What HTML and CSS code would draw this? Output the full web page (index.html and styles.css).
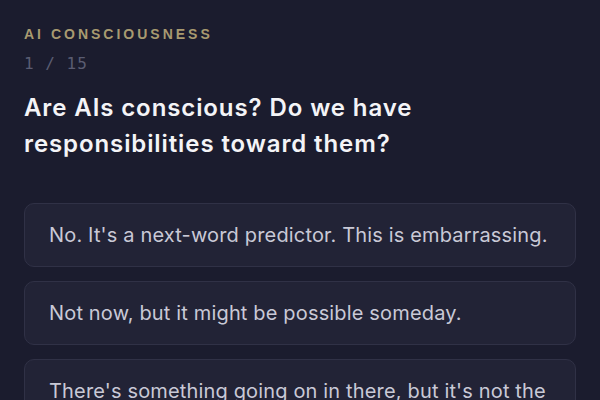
FILE: index.html
```html
<!DOCTYPE html>
<html lang="en">
<head>
<meta charset="utf-8">
<title>AI Consciousness</title>
<link rel="stylesheet" href="styles.css">
</head>
<body>
<main class="quiz">
  <header class="quiz-head">
    <div class="topic">AI CONSCIOUSNESS</div>
    <div class="counter">1 / 15</div>
    <h1 class="question">Are AIs conscious? Do we have responsibilities toward them?</h1>
  </header>
  <ul class="options">
    <li class="option">No. It's a next-word predictor. This is embarrassing.</li>
    <li class="option">Not now, but it might be possible someday.</li>
    <li class="option">There's something going on in there, but it's not the same as human consciousness.</li>
  </ul>
</main>
</body>
</html>
```

FILE: styles.css
```css
html, body {
  margin: 0;
  padding: 0;
  background: #1b1c2e;
}

body {
  overflow: hidden;
  height: 400px;
}

.quiz {
  padding: 24px 24px 0;
}

.topic {
  font-family: "Liberation Sans", Arial, sans-serif;
  font-weight: 700;
  font-size: 14px;
  line-height: 20px;
  letter-spacing: 3px;
  color: #a89a70;
}

.counter {
  margin-top: 8px;
  font-family: "DejaVu Sans Mono", monospace;
  font-size: 16px;
  line-height: 24px;
  letter-spacing: 1px;
  color: #5a5c72;
}

.question {
  margin: 14px 0 0;
  font-family: Inter, "Noto Sans", sans-serif;
  font-weight: 600;
  font-size: 24px;
  line-height: 36px;
  letter-spacing: 0.9px;
  color: #f4f4f7;
}

.options {
  list-style: none;
  margin: 41px 0 0;
  padding: 0;
  display: flex;
  flex-direction: column;
  gap: 14px;
}

.option {
  padding: 16px 24px;
  border: 1px solid #303146;
  border-radius: 10px;
  background: #222336;
  font-family: Inter, "Noto Sans", sans-serif;
  font-size: 20px;
  line-height: 30px;
  letter-spacing: 0.16px;
  color: #c9c9d6;
}
```
